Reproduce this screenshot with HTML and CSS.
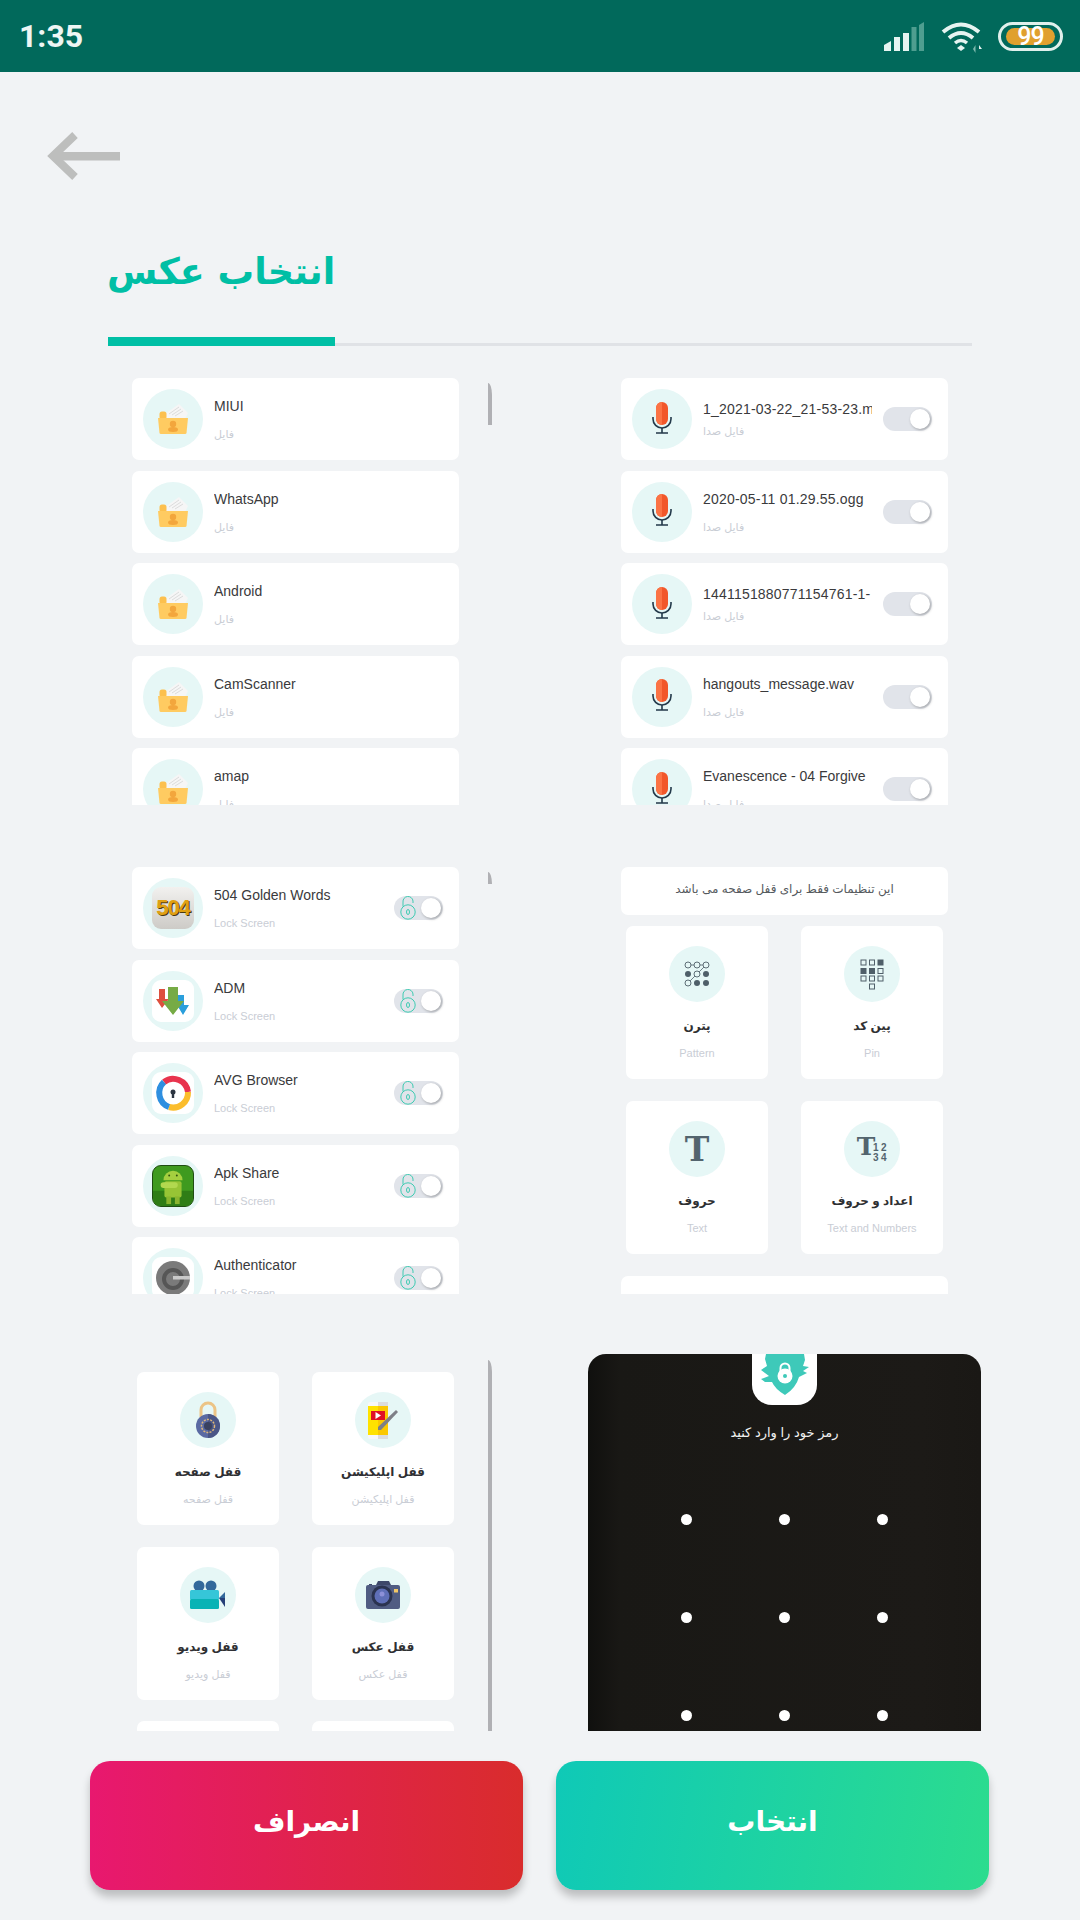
FILE: index.html
```html
<!DOCTYPE html>
<html lang="fa">
<head>
    <meta charset="utf-8">
    <title>انتخاب عکس</title>
    <link rel="stylesheet" href="styles.css">
</head>
<body>
    <svg class="icon-defs" width="0" height="0">
        <symbol id="folder" viewBox="0 0 30 30">
            <polygon points="7,10 21,0 30,9 27,15 7,15" fill="#f6f6f6"/>
            <path d="M11 10 L21 3 M14 11 L23 5 M17 12 L25 7" stroke="#dcdcdc" stroke-width="1"/>
            <rect x="1.5" y="7.500" width="7" height="8" rx="2.500" fill="#fcc04e"/>
            <path d="M0 14 H30 L28.500 29 Q28.400 30 27 30 H3 Q1.600 30 1.500 29 Z" fill="#ffcb61"/>
            <circle cx="15" cy="20" r="3.200" fill="#f3a63c"/>
            <ellipse cx="15" cy="25.500" rx="5" ry="2.500" fill="#f3a63c"/>
        </symbol>
        <symbol id="mic" viewBox="0 0 20 32">
            <rect x="4" y="0" width="12" height="23" rx="6" fill="#f2572a"/>
            <path d="M10 0 A6 6 0 0 0 4 6 V17 A6 6 0 0 0 10 23 Z" fill="#fb7345"/>
            <path d="M1 15 V17 A9 9 0 0 0 19 17 V15" fill="none" stroke="#23394a" stroke-width="1.600"/>
            <path d="M10 26 V31 M4 31 H16" fill="none" stroke="#23394a" stroke-width="1.600"/>
        </symbol>
        <symbol id="padlock" viewBox="0 0 16 24">
            <circle cx="8" cy="16" r="7.200" fill="none" stroke="#3ecbb2" stroke-width="1"/>
            <path d="M3 10.500 V6 A5 5 0 0 1 13 5 V7" fill="none" stroke="#3ecbb2" stroke-width="1"/>
            <ellipse cx="8" cy="16" rx="1.500" ry="2.500" fill="none" stroke="#3ecbb2" stroke-width="1"/>
        </symbol>
    </svg>

    <div class="status-bar">
        <span class="clock">1:35</span>
        <div class="status-icons">
            <svg class="signal" width="40" height="29" viewBox="0 0 40 29">
                <path d="M0 23 L7 19 V29 H0 Z" fill="#e6f4f1"/>
                <rect x="10" y="15" width="6" height="14" fill="#e6f4f1"/>
                <rect x="19" y="11" width="6" height="18" fill="#e6f4f1"/>
                <rect x="27.500" y="5" width="5" height="24" fill="#4f9e90"/>
                <path d="M35 3 L40 0 V29 H35 Z" fill="#4f9e90"/>
            </svg>
            <svg class="wifi" width="42" height="31" viewBox="0 0 42 31">
                <path d="M2 10 Q20 -5 38 10" fill="none" stroke="#e6f4f1" stroke-width="4"/>
                <path d="M8 16 Q20 6 32 16" fill="none" stroke="#e6f4f1" stroke-width="4"/>
                <path d="M14 21 Q20 16 26 21" fill="none" stroke="#e6f4f1" stroke-width="3.500"/>
                <path d="M16 26 L20 23 L24 26 L20 29 Z" fill="#e6f4f1"/>
                <path d="M34.500 23 V31 L32 27 Z" fill="#7fb9ae"/>
                <path d="M38 31 V23 L41 27 H38" fill="#e6f4f1"/>
            </svg>
            <div class="battery"><div class="battery-level">99</div></div>
        </div>
    </div>

    <div class="back-row">
        <svg width="74" height="48" viewBox="0 0 74 48">
            <path d="M28 3 L6 24 L28 45" fill="none" stroke="#bdbebd" stroke-width="8"/>
            <rect x="6" y="20" width="67" height="8.500" fill="#bdbebd"/>
        </svg>
    </div>

    <div class="page-title">انتخاب عکس</div>
    <div class="progress"><div class="progress-fill"></div></div>

    <!-- first row of screenshots -->
    <div class="shot-row">
        <div class="shot-list">
            <div class="row-card">
                <div class="round-icon"><svg width="30" height="30"><use href="#folder"/></svg></div>
                <div class="row-text"><div class="row-title">MIUI</div><div class="row-sub">فایل</div></div>
            </div>
            <div class="row-card">
                <div class="round-icon"><svg width="30" height="30"><use href="#folder"/></svg></div>
                <div class="row-text"><div class="row-title">WhatsApp</div><div class="row-sub">فایل</div></div>
            </div>
            <div class="row-card">
                <div class="round-icon"><svg width="30" height="30"><use href="#folder"/></svg></div>
                <div class="row-text"><div class="row-title">Android</div><div class="row-sub">فایل</div></div>
            </div>
            <div class="row-card">
                <div class="round-icon"><svg width="30" height="30"><use href="#folder"/></svg></div>
                <div class="row-text"><div class="row-title">CamScanner</div><div class="row-sub">فایل</div></div>
            </div>
            <div class="row-card">
                <div class="round-icon"><svg width="30" height="30"><use href="#folder"/></svg></div>
                <div class="row-text"><div class="row-title">amap</div><div class="row-sub">فایل</div></div>
            </div>
        </div>
        <div class="scrollbar scrollbar-short"></div>
        <div class="shot-list">
            <div class="row-card">
                <div class="round-icon"><svg class="mic-icon" width="20" height="32"><use href="#mic"/></svg></div>
                <div class="row-text tight"><div class="row-title digits">1_2021-03-22_21-53-23.m</div><div class="row-sub">فایل صدا</div></div>
                <div class="switch"><span class="knob"></span></div>
            </div>
            <div class="row-card">
                <div class="round-icon"><svg class="mic-icon" width="20" height="32"><use href="#mic"/></svg></div>
                <div class="row-text"><div class="row-title digits">2020-05-11 01.29.55.ogg</div><div class="row-sub">فایل صدا</div></div>
                <div class="switch"><span class="knob"></span></div>
            </div>
            <div class="row-card">
                <div class="round-icon"><svg class="mic-icon" width="20" height="32"><use href="#mic"/></svg></div>
                <div class="row-text tight"><div class="row-title digits">1441151880771154761-1-</div><div class="row-sub">فایل صدا</div></div>
                <div class="switch"><span class="knob"></span></div>
            </div>
            <div class="row-card">
                <div class="round-icon"><svg class="mic-icon" width="20" height="32"><use href="#mic"/></svg></div>
                <div class="row-text"><div class="row-title">hangouts_message.wav</div><div class="row-sub">فایل صدا</div></div>
                <div class="switch"><span class="knob"></span></div>
            </div>
            <div class="row-card">
                <div class="round-icon"><svg class="mic-icon" width="20" height="32"><use href="#mic"/></svg></div>
                <div class="row-text"><div class="row-title">Evanescence - 04 Forgive</div><div class="row-sub">فایل صدا</div></div>
                <div class="switch"><span class="knob"></span></div>
            </div>
        </div>
    </div>

    <!-- second row -->
    <div class="shot-row">
        <div class="shot-list">
            <div class="row-card">
                <div class="round-icon"><div class="app-tile tile-504">504</div></div>
                <div class="row-text"><div class="row-title">504 Golden Words</div><div class="row-sub">Lock Screen</div></div>
                <div class="switch switch-lock"><svg width="16" height="24"><use href="#padlock"/></svg><span class="knob"></span></div>
            </div>
            <div class="row-card">
                <div class="round-icon">
                    <div class="app-tile">
                        <svg width="42" height="42" viewBox="0 0 42 42">
                            <path d="M7 9 H13 V19 H17 L10 28 L4 19 H7 Z" fill="#dd4f3e"/>
                            <path d="M26 15 H32 V25 H37 L31 35 L25 25 H26 Z" fill="#2a9fdc"/>
                            <path d="M16 7 H26 V21 H32 L21 35 L10 21 H16 Z" fill="#76ab45"/>
                        </svg>
                    </div>
                </div>
                <div class="row-text"><div class="row-title">ADM</div><div class="row-sub">Lock Screen</div></div>
                <div class="switch switch-lock"><svg width="16" height="24"><use href="#padlock"/></svg><span class="knob"></span></div>
            </div>
            <div class="row-card">
                <div class="round-icon">
                    <div class="app-tile">
                        <svg width="42" height="42" viewBox="0 0 42 42">
                            <path d="M12 10 A15 15 0 0 1 36 20" fill="none" stroke="#e8344e" stroke-width="6"/>
                            <path d="M36 20 A15 15 0 0 1 17 35" fill="none" stroke="#fbbd2c" stroke-width="6"/>
                            <path d="M17 35 A15 15 0 0 1 12 10" fill="none" stroke="#2e8fe0" stroke-width="6"/>
                            <circle cx="21" cy="20" r="2.500" fill="#2b3440"/>
                            <rect x="19.800" y="20" width="2.400" height="6" fill="#2b3440"/>
                        </svg>
                    </div>
                </div>
                <div class="row-text"><div class="row-title">AVG Browser</div><div class="row-sub">Lock Screen</div></div>
                <div class="switch switch-lock"><svg width="16" height="24"><use href="#padlock"/></svg><span class="knob"></span></div>
            </div>
            <div class="row-card">
                <div class="round-icon">
                    <div class="app-tile tile-apk">
                        <svg width="42" height="42" viewBox="0 0 42 42">
                            <rect x="0" y="26" width="42" height="16" fill="#2f7d16"/>
                            <path d="M11 15 A9.500 9.500 0 0 1 31 15 Z" fill="#a4cf3f"/>
                            <rect x="12" y="16" width="18" height="17" rx="2" fill="#97c435"/>
                            <rect x="8" y="17" width="18" height="6" rx="3" fill="#b2d84f"/>
                            <rect x="14" y="32" width="5" height="8" fill="#8ab52f"/>
                            <rect x="23" y="32" width="5" height="8" fill="#8ab52f"/>
                            <circle cx="17" cy="10" r="1" fill="#33520f"/>
                            <circle cx="25" cy="10" r="1" fill="#33520f"/>
                        </svg>
                    </div>
                </div>
                <div class="row-text"><div class="row-title">Apk Share</div><div class="row-sub">Lock Screen</div></div>
                <div class="switch switch-lock"><svg width="16" height="24"><use href="#padlock"/></svg><span class="knob"></span></div>
            </div>
            <div class="row-card">
                <div class="round-icon">
                    <div class="app-tile">
                        <svg width="42" height="42" viewBox="0 0 42 42">
                            <circle cx="21" cy="21" r="17" fill="#7a7a7a"/>
                            <circle cx="21" cy="22" r="9" fill="none" stroke="#565656" stroke-width="4"/>
                            <rect x="21" y="19" width="17" height="3.500" fill="#c9c9c9"/>
                        </svg>
                    </div>
                </div>
                <div class="row-text"><div class="row-title">Authenticator</div><div class="row-sub">Lock Screen</div></div>
                <div class="switch switch-lock"><svg width="16" height="24"><use href="#padlock"/></svg><span class="knob"></span></div>
            </div>
        </div>
        <div class="scrollbar scrollbar-tiny"></div>
        <div class="shot-list">
            <div class="notice">این تنظیمات فقط برای قفل صفحه می باشد</div>
            <div class="tile-grid">
                <div class="tile">
                    <div class="tile-icon">
                        <svg width="26" height="26" viewBox="0 0 26 26">
                            <path d="M4 4 H22 L4 22" fill="none" stroke="#4f5f69" stroke-width="0.800"/>
                            <g fill="#e6f7f6" stroke="#4f5f69" stroke-width="0.900">
                                <circle cx="4" cy="4" r="3"/><circle cx="13" cy="4" r="3"/><circle cx="22" cy="4" r="3"/>
                                <circle cx="13" cy="13" r="3"/><circle cx="4" cy="22" r="3"/>
                            </g>
                            <g fill="#4f5f69">
                                <circle cx="4" cy="13" r="3"/><circle cx="22" cy="13" r="3"/>
                                <circle cx="13" cy="22" r="3"/><circle cx="22" cy="22" r="3"/>
                            </g>
                        </svg>
                    </div>
                    <div class="tile-label">پترن</div>
                    <div class="tile-sub">Pattern</div>
                </div>
                <div class="tile">
                    <div class="tile-icon">
                        <svg width="24" height="31" viewBox="0 0 24 31">
                            <g fill="none" stroke="#4f5f69" stroke-width="1">
                                <rect x="1" y="1" width="5" height="5"/><rect x="9.500" y="1" width="5" height="5"/>
                                <rect x="18" y="9.500" width="5" height="5"/>
                                <rect x="1" y="17" width="5" height="5"/><rect x="9.500" y="17" width="5" height="5"/><rect x="18" y="17" width="5" height="5"/>
                                <rect x="9.500" y="25" width="5" height="5"/>
                            </g>
                            <g fill="#4f5f69">
                                <rect x="17.500" y="0.500" width="6" height="6"/>
                                <rect x="0.500" y="9" width="6" height="6"/><rect x="9" y="9" width="6" height="6"/>
                            </g>
                        </svg>
                    </div>
                    <div class="tile-label">پین کد</div>
                    <div class="tile-sub">Pin</div>
                </div>
                <div class="tile">
                    <div class="tile-icon">
                        <svg width="28" height="28" viewBox="0 0 28 28">
                            <text x="14" y="26" text-anchor="middle" class="glyph-t">T</text>
                        </svg>
                    </div>
                    <div class="tile-label">حروف</div>
                    <div class="tile-sub">Text</div>
                </div>
                <div class="tile">
                    <div class="tile-icon">
                        <svg width="32" height="28" viewBox="0 0 32 28">
                            <text x="10" y="20" text-anchor="middle" class="glyph-t glyph-small">T</text>
                            <text x="17" y="16" class="glyph-num">1</text>
                            <text x="25" y="16" class="glyph-num">2</text>
                            <text x="17" y="26" class="glyph-num">3</text>
                            <text x="25" y="26" class="glyph-num">4</text>
                        </svg>
                    </div>
                    <div class="tile-label">اعداد و حروف</div>
                    <div class="tile-sub">Text and Numbers</div>
                </div>
            </div>
            <div class="notice notice-next"></div>
        </div>
    </div>

    <!-- third row -->
    <div class="shot-row shot-row-last">
        <div class="shot-list shot-list-tiles">
            <div class="tile-grid">
                <div class="tile">
                    <div class="tile-icon">
                        <svg width="26" height="38" viewBox="0 0 26 38">
                            <path d="M6 16 V9 A7 7 0 0 1 20 9 V16" fill="none" stroke="#ecc486" stroke-width="3"/>
                            <circle cx="13" cy="25" r="12" fill="#5a6aa3"/>
                            <path d="M13 13 A12 12 0 0 1 13 37 Z" fill="#4a5686"/>
                            <circle cx="13" cy="25" r="6.500" fill="none" stroke="#dcb67a" stroke-width="1.500" stroke-dasharray="2 1.200"/>
                            <circle cx="13" cy="25" r="4" fill="#39415f"/>
                        </svg>
                    </div>
                    <div class="tile-label">قفل صفحه</div>
                    <div class="tile-sub">قفل صفحه</div>
                </div>
                <div class="tile">
                    <div class="tile-icon">
                        <svg width="30" height="37" viewBox="0 0 30 37">
                            <rect x="0" y="0" width="20" height="37" rx="2" fill="#f7f7f7"/>
                            <rect x="10" y="0" width="10" height="37" fill="#dcdcdc"/>
                            <rect x="0" y="4" width="10" height="29" fill="#ffe200"/>
                            <rect x="10" y="4" width="10" height="29" fill="#fbc800"/>
                            <rect x="3" y="9" width="14" height="9" fill="#e01024"/>
                            <path d="M7.500 10 L13 13.500 L7.500 17 Z" fill="#ffffff"/>
                            <path d="M28 8 L30 10 L13 28 L10 28 L10 25 Z" fill="#7d7f86"/>
                        </svg>
                    </div>
                    <div class="tile-label">قفل اپلیکیشن</div>
                    <div class="tile-sub">قفل اپلیکیشن</div>
                </div>
                <div class="tile">
                    <div class="tile-icon">
                        <svg width="36" height="30" viewBox="0 0 36 30">
                            <circle cx="9" cy="6" r="5.500" fill="#33689b"/>
                            <circle cx="21" cy="6" r="5.500" fill="#33689b"/>
                            <rect x="0" y="10" width="29" height="10" rx="1.500" fill="#36c6d8"/>
                            <rect x="0" y="19" width="29" height="10" rx="1.500" fill="#08b3b5"/>
                            <path d="M29 18 L35 12 V20 Z" fill="#33689b"/>
                            <path d="M29 18 H35 V27 Z" fill="#253f78"/>
                        </svg>
                    </div>
                    <div class="tile-label">قفل ویدیو</div>
                    <div class="tile-sub">قفل ویدیو</div>
                </div>
                <div class="tile">
                    <div class="tile-icon">
                        <svg width="34" height="28" viewBox="0 0 34 28">
                            <rect x="3" y="3" width="3" height="3" fill="#3e486a"/>
                            <path d="M10 4 L12 0 H23 L25 4 Z" fill="#3e486a"/>
                            <rect x="0" y="4" width="34" height="24" rx="2" fill="#505c82"/>
                            <circle cx="16" cy="15" r="10.500" fill="#2b3350"/>
                            <circle cx="16" cy="15" r="7.500" fill="#5f6fb8"/>
                            <circle cx="16" cy="13" r="2.500" fill="#8d90d8"/>
                            <rect x="28" y="8" width="4" height="3.500" fill="#f2c766"/>
                        </svg>
                    </div>
                    <div class="tile-label">قفل عکس</div>
                    <div class="tile-sub">قفل عکس</div>
                </div>
                <div class="tile"></div>
                <div class="tile"></div>
            </div>
        </div>
        <div class="scrollbar scrollbar-long"></div>
        <div class="lock-screen">
            <div class="lock-badge">
                <svg width="48" height="41" viewBox="0 0 48 41">
                    <path d="M5 0 H43 L44 6 L42 12 L48 13 L42 17 L46 19 L38 23 Q35 34 24 41 Q14 35 11 28 L4 28 L0 25 L8 22 L0 16 L6 12 L4 5 Z" fill="#3ec9b9"/>
                    <path d="M19.500 18 V14 A4.500 4.500 0 0 1 28.500 14 V18" fill="none" stroke="#ffffff" stroke-width="2"/>
                    <circle cx="24" cy="22" r="7.500" fill="#ffffff"/>
                    <circle cx="24" cy="22" r="2" fill="#3ec9b9"/>
                </svg>
            </div>
            <div class="lock-hint">رمز خود را وارد کنید</div>
            <div class="dots">
                <span class="dot"></span><span class="dot"></span><span class="dot"></span>
                <span class="dot"></span><span class="dot"></span><span class="dot"></span>
                <span class="dot"></span><span class="dot"></span><span class="dot"></span>
            </div>
        </div>
    </div>

    <div class="actions">
        <button class="action-button action-cancel">انصراف</button>
        <button class="action-button action-ok">انتخاب</button>
    </div>
</body>
</html>
```

FILE: styles.css
```css
/* Reset default margins and padding */
* {
    margin: 0;
    padding: 0;
    box-sizing: border-box;
    font-family: 'Liberation Sans', 'DejaVu Sans', sans-serif;
}

html, body {
    width: 1080px;
    height: 1920px;
    overflow: hidden;
    background-color: #f1f3f5;
}

.icon-defs {
    display: block;
    height: 0;
}

/* Status bar */
.status-bar {
    display: flex;
    justify-content: space-between;
    align-items: center;
    height: 72px;
    padding: 0 17px 0 19px;
    background-color: #01695b;
}

.clock {
    font-family: 'Roboto', sans-serif;
    font-size: 32px;
    font-weight: 700;
    color: #eef6f4;
}

.status-icons {
    display: flex;
    align-items: center;
    gap: 15px;
}

.signal {
    margin-right: 2px;
}

.wifi {
    margin-top: 2px;
}

.battery {
    display: flex;
    align-items: center;
    justify-content: center;
    width: 65px;
    height: 29px;
    border: 3px solid #e0f0ec;
    border-radius: 15px;
}

.battery-level {
    width: 49px;
    height: 17px;
    border-radius: 9px;
    background-color: #e0a02e;
    color: #ffffff;
    font-family: 'Roboto', sans-serif;
    font-size: 25px;
    font-weight: 500;
    line-height: 17px;
    letter-spacing: -1px;
    text-align: center;
}

/* Header */
.back-row {
    height: 48px;
    margin-top: 60px;
    padding-left: 47px;
}

.page-title {
    height: 60px;
    margin-top: 62px;
    padding-left: 107px;
    color: #00bfa5;
    font-family: 'DejaVu Sans', sans-serif;
    font-size: 36.5px;
    font-weight: bold;
    line-height: 60px;
}

.progress {
    width: 864px;
    height: 9px;
    margin: 35px 0 32px 108px;
    border-bottom: 3px solid #e0e2e6;
}

.progress-fill {
    width: 227px;
    height: 9px;
    background-color: #00bfa5;
}

/* Shots */
.shot-row {
    display: flex;
    height: 427px;
    margin-bottom: 62px;
    padding-left: 132px;
}

.shot-row-last {
    height: 377px;
    margin-bottom: 30px;
    margin-top: -2px;
}

.shot-list {
    width: 327px;
    height: 100%;
    overflow: hidden;
}

.shot-list-tiles {
    padding-top: 18px;
}

.scrollbar {
    flex: none;
    width: 4px;
    margin-left: 29px;
    margin-right: 129px;
    margin-top: 5px;
    background-color: #b0b0b4;
    border-top-right-radius: 4px 12px;
}

.scrollbar-short {
    height: 42px;
}

.scrollbar-tiny {
    height: 12px;
}

.scrollbar-long {
    height: 371px;
    margin-top: 6px;
    margin-right: 96px;
}

.row-card {
    display: flex;
    align-items: center;
    gap: 11px;
    height: 82px;
    margin-bottom: 10.5px;
    padding: 0 16px 0 11px;
    background-color: #ffffff;
    border-radius: 7px;
}

.round-icon {
    display: flex;
    flex: none;
    justify-content: center;
    align-items: center;
    width: 60px;
    height: 60px;
    border-radius: 50%;
    background-color: #e6f7f6;
}

.mic-icon {
    margin-bottom: 3px;
}

.row-text {
    flex: 1;
    align-self: flex-start;
    display: flex;
    flex-direction: column;
    gap: 10px;
    min-width: 0;
    padding-top: 18px;
    overflow: hidden;
}

.row-text.tight {
    gap: 4px;
    padding-top: 21px;
}

.row-title {
    color: #3a3a3c;
    font-size: 14px;
    line-height: 20px;
    white-space: nowrap;
    overflow: hidden;
}

.row-title.digits {
    letter-spacing: 0.2px;
}

.row-sub {
    color: #c9cdd5;
    font-size: 11px;
    line-height: 16px;
    white-space: nowrap;
}

.switch {
    display: flex;
    flex: none;
    justify-content: flex-end;
    align-items: center;
    width: 49px;
    height: 24px;
    padding: 0 2px;
    border-radius: 12px;
    background-color: #e1e4ea;
}

.switch-lock {
    justify-content: space-between;
    padding-left: 6px;
}

.knob {
    width: 20px;
    height: 20px;
    border-radius: 50%;
    background-color: #ffffff;
    box-shadow: 1px 1px 3px rgba(0,0,0,0.3);
}

.app-tile {
    display: flex;
    justify-content: center;
    align-items: center;
    width: 42px;
    height: 42px;
    overflow: hidden;
    border-radius: 9px;
    background-color: #ffffff;
}

.tile-504 {
    background: linear-gradient(#f2f1ef, #cdcbc7);
    color: #e0a012;
    font-size: 22px;
    font-weight: bold;
    letter-spacing: -1px;
    text-shadow: 1px 1px 0 #4a3a10;
}

.tile-apk {
    background-color: #3f9a1f;
    border: 1px solid #1f4d12;
}

.notice {
    height: 48px;
    margin-bottom: 11px;
    background-color: #ffffff;
    border-radius: 7px;
    color: #555a5e;
    font-size: 12px;
    line-height: 44px;
    text-align: center;
}

.notice-next {
    margin-top: 22px;
}

.tile-grid {
    display: grid;
    grid-template-columns: 142px 142px;
    grid-auto-rows: 153px;
    gap: 21.5px 33px;
    padding: 0 5px;
}

.tile {
    display: flex;
    flex-direction: column;
    align-items: center;
    padding-top: 20px;
    background-color: #ffffff;
    border-radius: 7px;
}

.tile-icon {
    display: flex;
    justify-content: center;
    align-items: center;
    width: 56px;
    height: 56px;
    border-radius: 50%;
    background-color: #e6f7f6;
}

.tile-label {
    margin-top: 14px;
    color: #2f3033;
    font-size: 12px;
    font-weight: bold;
    line-height: 20px;
}

.tile-sub {
    margin-top: 9px;
    color: #c9cdd5;
    font-size: 11px;
    line-height: 16px;
}

.glyph-t {
    font-family: 'DejaVu Serif', serif;
    font-size: 33px;
    font-weight: bold;
    fill: #53646e;
}

.glyph-small {
    font-size: 25px;
}

.glyph-num {
    font-family: 'Liberation Sans', sans-serif;
    font-size: 10px;
    font-weight: bold;
    fill: #53646e;
}

/* Lock screen */
.lock-screen {
    flex: none;
    width: 393px;
    height: 100%;
    overflow: hidden;
    border-radius: 18px 18px 0 0;
    background: linear-gradient(90deg, #10100e, #191815 8%, #1c1a17 85%, #1a1815);
    text-align: center;
}

.lock-badge {
    display: flex;
    justify-content: center;
    width: 65px;
    height: 51px;
    margin: 0 auto;
    border-radius: 0 0 20px 20px;
    background-color: #ffffff;
}

.lock-hint {
    margin-top: 18px;
    color: #f2f2f2;
    font-size: 13px;
    line-height: 20px;
}

.dots {
    display: grid;
    grid-template-columns: repeat(3, 98px);
    grid-auto-rows: 98px;
    justify-content: center;
    place-items: center;
    margin-top: 27px;
}

.dot {
    width: 11px;
    height: 11px;
    border-radius: 50%;
    background-color: #ffffff;
}

/* Bottom buttons */
.actions {
    display: flex;
    gap: 33px;
    padding: 0 90px;
}

.action-button {
    width: 433px;
    height: 129px;
    padding-bottom: 8px;
    border: none;
    border-radius: 20px;
    box-shadow: 0 7px 9px rgba(0,0,0,0.22);
    color: #ffffff;
    font-family: 'DejaVu Sans', sans-serif;
    font-size: 28px;
    font-weight: bold;
}

.action-cancel {
    background: linear-gradient(90deg, #e8186f, #d92c2c);
}

.action-ok {
    background: linear-gradient(100deg, #0fc9b7, #2cdc8e);
}
```
